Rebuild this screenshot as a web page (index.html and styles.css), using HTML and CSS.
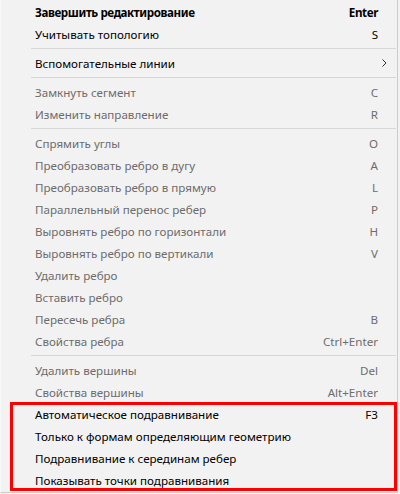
FILE: index.html
```html
<!DOCTYPE html>
<html lang="ru">
<head>
<meta charset="utf-8">
<link rel="stylesheet" href="styles.css">
</head>
<body>
<div class="menu">
  <div class="item bold"><span>Завершить редактирование</span><span class="key">Enter</span></div>
  <div class="item"><span>Учитывать топологию</span><span class="key">S</span></div>
  <div class="sep"></div>
  <div class="item"><span>Вспомогательные линии</span><span class="arrow"><svg width="5" height="8" viewBox="0 0 5 8"><path d="M0.5 0.5 L4 4 L0.5 7.5" fill="none" stroke="#333" stroke-width="1"/></svg></span></div>
  <div class="sep"></div>
  <div class="item off"><span>Замкнуть сегмент</span><span class="key">C</span></div>
  <div class="item off"><span>Изменить направление</span><span class="key">R</span></div>
  <div class="sep"></div>
  <div class="item off"><span>Спрямить углы</span><span class="key">O</span></div>
  <div class="item off"><span>Преобразовать ребро в дугу</span><span class="key">A</span></div>
  <div class="item off"><span>Преобразовать ребро в прямую</span><span class="key">L</span></div>
  <div class="item off"><span>Параллельный перенос ребер</span><span class="key">P</span></div>
  <div class="item off"><span>Выровнять ребро по горизонтали</span><span class="key">H</span></div>
  <div class="item off"><span>Выровнять ребро по вертикали</span><span class="key">V</span></div>
  <div class="item off"><span>Удалить ребро</span><span class="key"></span></div>
  <div class="item off"><span>Вставить ребро</span><span class="key"></span></div>
  <div class="item off"><span>Пересечь ребра</span><span class="key">B</span></div>
  <div class="item off"><span>Свойства ребра</span><span class="key">Ctrl+Enter</span></div>
  <div class="sep"></div>
  <div class="item off"><span>Удалить вершины</span><span class="key">Del</span></div>
  <div class="item off"><span>Свойства вершины</span><span class="key">Alt+Enter</span></div>
  <div class="item"><span>Автоматическое подравнивание</span><span class="key">F3</span></div>
  <div class="item"><span>Только к формам определяющим геометрию</span><span class="key"></span></div>
  <div class="item"><span>Подравнивание к серединам ребер</span><span class="key"></span></div>
  <div class="item"><span>Показывать точки подравнивания</span><span class="key"></span></div>
  <div class="highlight"></div>
</div>
</body>
</html>
```
FILE: styles.css
```css
html, body {
  margin: 0;
  padding: 0;
  background: #f2f2f2;
}
body {
  width: 400px;
  height: 494px;
  overflow: hidden;
  font-family: "Noto Sans", "Open Sans", sans-serif;
  font-size: 11.6px;
  color: #000;
}
.menu {
  position: relative;
  width: 396px;
  height: 491px;
  padding-top: 1px;
  background: #f2f2f2;
  border-left: 1px solid #f9f9f9;
  border-right: 1px solid #cccccc;
  border-bottom: 1px solid #cccccc;
  box-sizing: content-box;
}
.item {
  height: 22px;
  display: flex;
  align-items: center;
  justify-content: space-between;
  padding-left: 34px;
  padding-right: 19px;
  white-space: nowrap;
}
.bold {
  font-weight: bold;
  letter-spacing: -0.4px;
}
.off {
  color: #6d6d6d;
}
.sep {
  height: 7px;
  display: flex;
  align-items: center;
  padding-left: 30px;
  padding-right: 1px;
}
.sep::before {
  content: "";
  display: block;
  flex: 1;
  height: 1px;
  background: #d7d7d7;
}
.arrow {
  display: flex;
  align-items: center;
  margin-right: -9px;
}
.highlight {
  position: absolute;
  left: 9px;
  top: 402px;
  width: 381px;
  height: 83px;
  border: 3px solid #ff0000;
}
```
